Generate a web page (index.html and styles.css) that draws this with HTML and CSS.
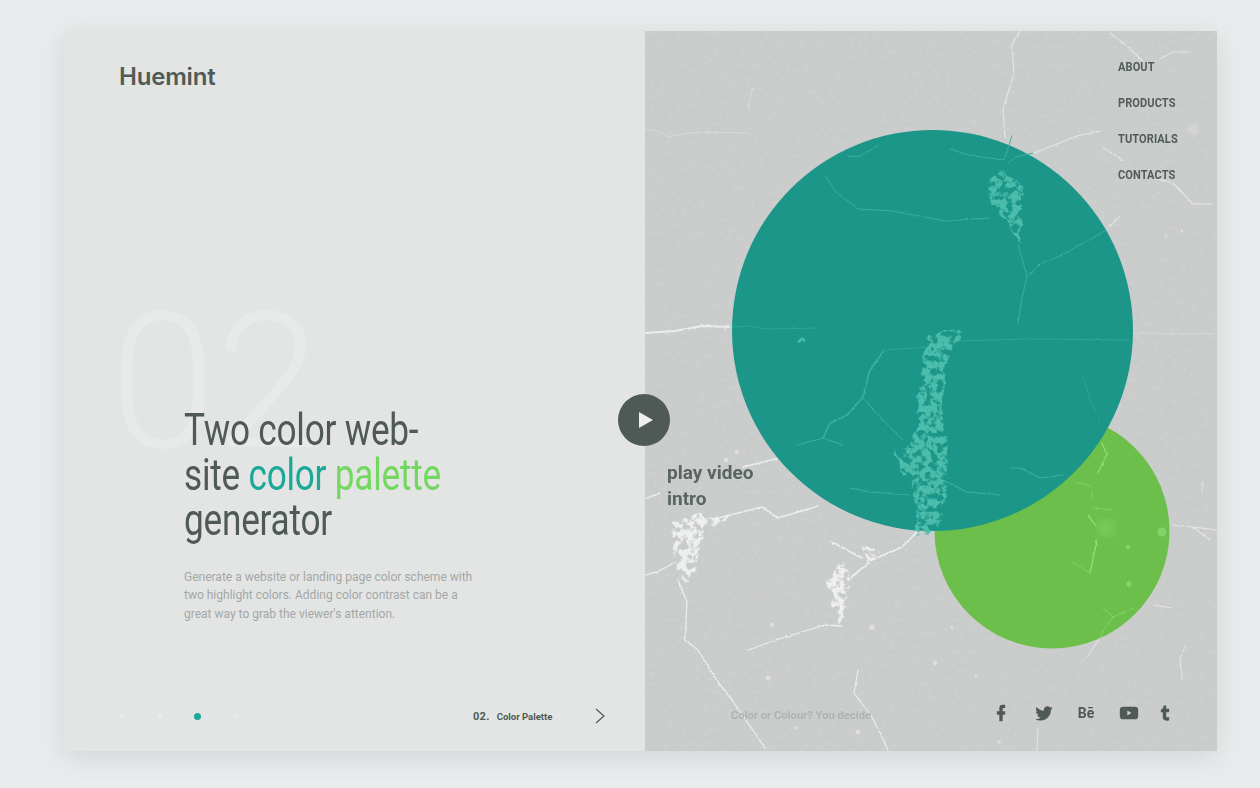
FILE: index.html
```html
<!DOCTYPE HTML>
<html>
  <head>
    <title>Huemint</title>
    <link rel="stylesheet" href="styles.css">
  </head>
  <body>
    <div class="card">

      <!-- left side -->
      <section class="left">
        <div class="logo">Huemint</div>

        <div class="hero">
          <div class="bignum">02</div>
          <h1>Two color web-<br>site <span class="teal">color</span> <span class="green">palette</span><br>generator</h1>
          <p>Generate a website or landing page color scheme with two highlight colors. Adding color contrast can be a great way to grab the viewer's attention.</p>
        </div>

        <div class="pager">
          <div class="dots">
            <span class="dot"></span>
            <span class="dot"></span>
            <span class="dot active"></span>
            <span class="dot"></span>
          </div>
          <div class="slide-name"><b>02.</b><span>Color Palette</span></div>
          <svg class="next" viewBox="0 0 10 16"><path d="M1 1l8 7-8 7" fill="none" stroke="#4f5a57" stroke-width="1.2"/></svg>
        </div>
      </section>

      <!-- right side -->
      <section class="right">
        <svg class="art" viewBox="645 31 572 720">
          <defs>
            <filter id="thin" x="-10%" y="-10%" width="120%" height="120%" color-interpolation-filters="sRGB">
              <feTurbulence type="fractalNoise" baseFrequency="0.25" numOctaves="2" seed="9" result="n"/>
              <feDisplacementMap in="SourceGraphic" in2="n" scale="2.500" xChannelSelector="R" yChannelSelector="G"/>
              <feGaussianBlur stdDeviation="0.4"/>
            </filter>
            <filter id="mottle" x="-20%" y="-20%" width="140%" height="140%" color-interpolation-filters="sRGB">
              <feTurbulence type="fractalNoise" baseFrequency="0.1" numOctaves="3" seed="4" result="n"/>
              <feDisplacementMap in="SourceGraphic" in2="n" scale="10" xChannelSelector="R" yChannelSelector="G" result="d"/>
              <feTurbulence type="fractalNoise" baseFrequency="0.16" numOctaves="3" seed="21"/>
              <feColorMatrix values="0 0 0 0 0  0 0 0 0 0  0 0 0 0 0  0 0 0 6 -2.300" result="m"/>
              <feComposite in="d" in2="m" operator="in"/>
              <feGaussianBlur stdDeviation="0.45"/>
            </filter>
            <filter id="grain" x="0" y="0" width="100%" height="100%" color-interpolation-filters="sRGB">
              <feTurbulence type="fractalNoise" baseFrequency="0.22" numOctaves="4" seed="12"/>
              <feColorMatrix values="0 0 0 0 1  0 0 0 0 1  0 0 0 0 1  0 0 0 3 -1.500"/>
            </filter>
            <filter id="glow"><feGaussianBlur stdDeviation="4"/></filter>
          </defs>

          <rect x="645" y="31" width="572" height="720" filter="url(#grain)" opacity="0.08"/>

          <!-- cracks on the grey wall -->
          <g fill="none" stroke="#eceeed" filter="url(#thin)" stroke-linecap="round" stroke-linejoin="round">
            <path stroke-width="1.800" d="M645 333l30-2 27-5 30 1"/>
            <path stroke-width="1.300" d="M645 575l14-4 16-9M678 580l9 22-2 38 13 10 20 32 14 18 33 48"/>
            <path stroke-width="1.600" d="M712 520l10-3 40-10 16 11 40-12M743 467l37-9M647 498l13-5"/>
            <path stroke-width="1.300" d="M748 650l34-12 43-13 17 1"/>
            <path stroke-width="1.700" d="M848 580l24-20 30-13 20-20M832 542l30 16"/>
            <path stroke-width="1.100" d="M858 670l-4 23 18 24 16 33"/>
            <path stroke-width="1.100" opacity="0.8" d="M1020 31l-8 13 2 30-11 35 2 29M1033 153l24-9 20-8 23-5M1157 179l16 4 20 21 19 0M1172 525l21 2 17 13M1193 527l24 3"/>
            <path stroke-width="1.100" opacity="0.7" d="M1110 33l17 13 16 15M1160 59l13-7 17 0M1103 148l14 8 6 5M1107 229l13-13M1100 638l-13 19M1153 605l19 3M1185 647l-5 11 2 22M1203 483l-1 9M1038 728l-1 22"/>
            <path stroke-width="0.900" opacity="0.45" d="M645 128l12 3 11 6 20-4 17-1 43 1M752 88l-4 21M1133 333l84 1"/>
          </g>
          <g fill="#eef0ef" filter="url(#mottle)">
            <path d="M672 522l28-8 8 6-6 18-4 20-8 24-8 0-8-30z"/>
            <path d="M702 522l22-8 6 3-16 8z"/>
            <path d="M843 559l7 22-6 30-4 14-9-30-3-14z"/>
            <path d="M864 549l11-3 4 7-9 8-6-4z"/>
          </g>
          <g fill="#e4e6e5" opacity="0.75">
            <circle cx="772" cy="625" r="2.200"/><circle cx="872" cy="627" r="2.600"/><circle cx="768" cy="678" r="2.500"/><circle cx="858" cy="732" r="2.600"/><circle cx="796" cy="728" r="1.800"/><circle cx="737" cy="452" r="2.200"/><circle cx="726" cy="460" r="2.200"/>
            <circle cx="952" cy="627" r="1.600"/><circle cx="935" cy="663" r="2.200"/><circle cx="976" cy="676" r="1.300"/><circle cx="999" cy="742" r="1.800"/><circle cx="1182" cy="231" r="1.300"/>
            <circle cx="1193" cy="129" r="6" opacity="0.35"/><circle cx="1166" cy="236" r="2" opacity="0.5"/>
          </g>

          <!-- green circle -->
          <circle cx="1052" cy="531" r="117.5" fill="#6dbf4b"/>
          <g fill="none" stroke="#8fdc70" stroke-width="1" filter="url(#thin)" stroke-linecap="round">
            <path stroke-width="1.400" d="M1102 443l5 12-9 18M1097 540l-7 33M1088 515l8 11"/>
            <path opacity="0.7" d="M1077 482l16 5-2 11M1093 508l20 2M1090 573l-18-11M1103 608l10 9 20-9M1113 617l-8 10-5 12"/>
          </g>
          <circle cx="1106" cy="528" r="9" fill="#86d668" opacity="0.5" filter="url(#glow)"/>
          <g fill="#84d268">
            <circle cx="1162" cy="532" r="4.500"/><circle cx="1128" cy="547" r="2.200"/><circle cx="1129" cy="584" r="2.800"/>
          </g>

          <!-- teal circle -->
          <circle cx="932.5" cy="330.5" r="200.5" fill="#1c9688"/>
          <g fill="none" stroke="#3ab0a0" stroke-width="1" filter="url(#thin)" stroke-linecap="round" stroke-linejoin="round">
            <path d="M825 176l10 15 23 18 34 2 33 6 20 4 45-3"/>
            <path d="M1018 244l9 32-5 22-4 26M1028 276l12-12 20-8 40-22 7-5"/>
            <path opacity="0.6" d="M883 350l47-3 23-6 77-2 100 1M730 327l18-1 20 3 50-1"/>
            <path stroke-width="1.700" d="M883 352l-13 18-7 27-16 18-17 8-7 15"/>
            <path d="M823 438l-26 7M823 438l20 7M863 398l20 22 20 20"/>
            <path d="M848 156l10 1 20-11M950 149l18 6 36 5 8-24M1008 163l8-6 17-4"/>
            <path stroke-width="1.200" d="M943 480l24 12 33 3M850 488l20 4 40 3M1010 468l10 0 20 10 23-3"/>
            <path opacity="0.5" d="M1082 374l8 24 10 23"/>
          </g>
          <g fill="#4cbdac" filter="url(#mottle)">
            <path d="M990 178l14-7 16 12 2 30-2 30-10-14-14-20-8-14z"/>
            <path d="M928 336l30-8 4 10-12 14-6 30-2 34 4 20 2 50-8 36-12 16-10-4-6-50-6-36 8-14 6-12-4-20 6-30z"/>
            <path d="M893 447l17 22 4 10-14-8z"/>
            <circle cx="801" cy="341" r="3"/>
          </g>
        </svg>

        <button class="play"><svg viewBox="0 0 14 16"><path d="M0 0l14 8-14 8z" fill="#eef0ef"/></svg></button>
        <div class="play-label">play video<br>intro</div>

        <ul class="nav">
          <li>ABOUT</li>
          <li>PRODUCTS</li>
          <li>TUTORIALS</li>
          <li>CONTACTS</li>
        </ul>

        <div class="foot">
          <span class="caption">Color or Colour? You decide</span>
          <div class="social">
            <svg viewBox="0 0 24 24"><path d="M17 2v4h-2c-.7 0-1 .8-1 1.500V10h3v4h-3v8h-4v-8H7v-4h3V6a4 4 0 0 1 4-4z"/></svg>
            <svg viewBox="0 0 24 24"><path d="M22.460 6c-.77.350-1.600.580-2.460.690.880-.530 1.560-1.370 1.880-2.380-.830.500-1.750.850-2.720 1.050C18.370 4.500 17.260 4 16 4c-2.350 0-4.270 1.920-4.270 4.290 0 .340.040.670.110.980C8.280 9.090 5.110 7.380 3 4.790c-.370.630-.580 1.370-.580 2.150 0 1.490.750 2.810 1.910 3.560-.710 0-1.370-.200-1.950-.500v.030c0 2.080 1.480 3.820 3.440 4.210-.360.100-.740.150-1.130.150-.270 0-.540-.030-.800-.080.540 1.690 2.110 2.950 4 2.980-1.460 1.160-3.320 1.840-5.330 1.840-.340 0-.680-.020-1.020-.060C3.440 20.290 5.700 21 8.120 21 16 21 20.330 14.460 20.330 8.790c0-.190 0-.370-.010-.560.840-.600 1.560-1.360 2.140-2.230z"/></svg>
            <span class="be">Bē</span>
            <svg viewBox="0 0 24 24"><path fill-rule="evenodd" d="M5 4.500h14a4 4 0 0 1 4 4v7a4 4 0 0 1-4 4H5a4 4 0 0 1-4-4v-7a4 4 0 0 1 4-4zM10 9v6l5-3z"/></svg>
            <svg class="tumblr" viewBox="0 0 24 24"><path d="M17 11h-3.500v4.500c0 .9.300 1.500 1.400 1.500H17v4s-1.400.200-3 .200c-3 0-4.700-1.800-4.700-4.300V11H7V7.700c2.700-.300 3-2.300 3.200-4.700h3.300v4H17z"/></svg>
          </div>
        </div>
      </section>
    </div>
  </body>
</html>
```

FILE: styles.css
```css
*{
  padding:0;
  margin:0;
  box-sizing:border-box;
}

body{
  background-color:#e8ecec;
  font-family:Roboto, "Liberation Sans", sans-serif;
  color:#4f5a57;
  overflow:hidden;
  height:788px;
  padding:31px 43px 0 64px;
}

.card{
  display:flex;
  height:720px;
  box-shadow:0 6px 24px rgba(90,100,100,0.16);
}

/* ---------- left ---------- */

.left{
  width:581px;
  background-color:#e3e5e4;
  display:flex;
  flex-direction:column;
  padding:32px 0 25px 55px;
}

.logo{
  font-family:Inter, "Liberation Sans", sans-serif;
  font-size:24px;
  font-weight:600;
  line-height:28px;
  letter-spacing:-0.2px;
  color:#505b58;
}

.hero{
  position:relative;
  margin-top:auto;
  margin-bottom:83px;
  padding-left:65px;
}

.bignum{
  position:absolute;
  left:-9px;
  top:-121px;
  font-size:190px;
  font-weight:300;
  line-height:190px;
  color:#e7eae9;
}

/* the headline face is a condensed one, Roboto squeezed to get there */
h1{
  position:relative;
  font-size:44px;
  font-weight:400;
  line-height:45px;
  letter-spacing:-0.3px;
  white-space:nowrap;
  transform:scaleX(0.8);
  transform-origin:left;
}

.teal{ color:#1aa897; }
.green{ color:#74d860; }

.hero p{
  position:relative;
  width:295px;
  margin-top:25px;
  font-size:12px;
  line-height:18.500px;
  color:#a3a7a5;
}

.pager{
  display:flex;
  align-items:center;
  height:20px;
}

.dots{
  display:flex;
  align-items:center;
  gap:31.500px;
  width:354px;
}

.dot{
  width:6px;
  height:6px;
  border-radius:50%;
  background-color:#e7eae9;
}

.dot.active{
  width:7px;
  height:7px;
  background-color:#1aa897;
}

.slide-name{
  display:flex;
  align-items:baseline;
  gap:7px;
  width:122px;
  font-size:9.500px;
  font-weight:700;
}

.slide-name b{
  font-size:11px;
  font-weight:700;
  letter-spacing:0.3px;
}

.next{
  width:10px;
  height:16px;
}

/* ---------- right ---------- */

.right{
  position:relative;
  width:572px;
  background-color:#cacccb;
  display:flex;
  flex-direction:column;
}

.art{
  position:absolute;
  left:0;
  top:0;
  width:572px;
  height:720px;
}

.play{
  position:absolute;
  left:-27px;
  top:363px;
  width:52px;
  height:52px;
  border:none;
  border-radius:50%;
  background-color:#4f5a57;
  display:flex;
  align-items:center;
  justify-content:center;
}

.play svg{
  width:14px;
  height:16px;
  margin-left:3px;
}

.play-label{
  position:absolute;
  left:22px;
  top:429px;
  font-size:19px;
  font-weight:700;
  line-height:26px;
  color:#5a6461;
}

.nav{
  position:relative;
  list-style:none;
  margin:28px 0 0 473px;
  display:flex;
  flex-direction:column;
  gap:20px;
  font-size:13px;
  font-weight:700;
  line-height:16px;
  letter-spacing:0.1px;
  color:#525c59;
  transform:scaleX(0.85);
  transform-origin:left;
}

.foot{
  position:relative;
  margin-top:auto;
  height:20px;
  margin-bottom:28px;
  padding:0 42px 0 86px;
  display:flex;
  align-items:center;
  justify-content:space-between;
}

.caption{
  font-size:11.200px;
  font-weight:700;
  color:#afb2b1;
  position:relative;
  top:2px;
}

.social{
  display:flex;
  align-items:center;
  gap:22.500px;
}

.social svg{
  width:20px;
  height:20px;
  fill:#4f5a57;
}

.social .tumblr{
  margin-left:-6px;
}

.be{
  width:20px;
  text-align:center;
  font-size:14px;
  font-weight:700;
  white-space:nowrap;
}
```
